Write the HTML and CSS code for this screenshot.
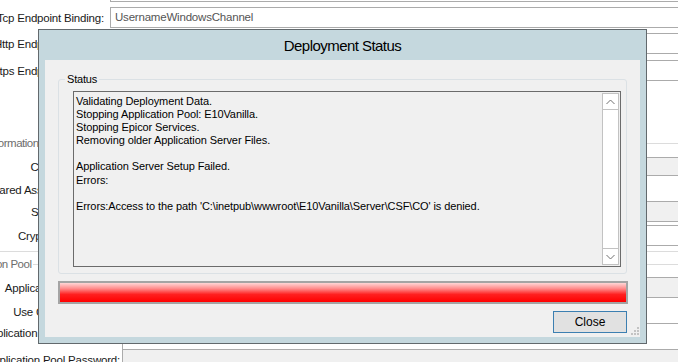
FILE: index.html
```html
<!DOCTYPE html>
<html>
<head>
    <title>Deployment Status</title>
    <link rel="stylesheet" href="styles.css">
</head>
<body>
    <div class="settings">
        <div class="row top-row">
            <div class="label"></div>
            <div class="field"></div>
        </div>
        <div class="row gap-5">
            <div class="label"><span>Tcp Endpoint Binding:</span></div>
            <div class="field">UsernameWindowsChannel</div>
        </div>
        <div class="row gap-5">
            <div class="label"><span>Http Endpoint Binding:</span></div>
            <div class="field"></div>
        </div>
        <div class="row gap-6">
            <div class="label"><span>Https Endpoint Binding:</span></div>
            <div class="field"></div>
        </div>

        <fieldset class="group server-group">
            <legend>Server Information</legend>
            <div class="row gap-7">
                <div class="label"><span>Configuration File:</span></div>
                <div class="field short disabled"></div>
            </div>
            <div class="row gap-4 plain-row">
                <div class="label"><span>Shared Assembly Location:</span></div>
            </div>
            <div class="row gap-2">
                <div class="label"><span>Server Descriptor:</span></div>
                <div class="field disabled"></div>
            </div>
            <div class="row gap-3">
                <div class="label"><span>Crypto Provider Key:</span></div>
                <div class="field"></div>
            </div>
        </fieldset>

        <fieldset class="group pool-group">
            <legend>Application Pool</legend>
            <div class="row gap-6">
                <div class="label"><span>Application Pool Name:</span></div>
                <div class="field disabled"></div>
            </div>
            <div class="row gap-4 plain-row">
                <div class="label"><span>Use Custom Account:</span></div>
            </div>
            <div class="row gap-2 user-row">
                <div class="label"><span>Application Pool Username:</span></div>
                <div class="field tall"></div>
            </div>
            <div class="row">
                <div class="label"><span>Application Pool Password:</span></div>
                <div class="field disabled"></div>
            </div>
        </fieldset>
    </div>

    <div class="dialog">
        <div class="dialog-title">Deployment Status</div>
        <div class="dialog-body">
            <div class="status-group">
                <span class="status-label">Status</span>
                <div class="log-box">
<div class="log-text">Validating Deployment Data.
Stopping Application Pool: E10Vanilla.
Stopping Epicor Services.
Removing older Application Server Files.

Application Server Setup Failed.
Errors:

Errors:Access to the path 'C:\inetpub\wwwroot\E10Vanilla\Server\CSF\CO' is denied.</div>
                    <div class="scrollbar">
                        <div class="scroll-btn up">
                            <svg width="9" height="6" viewBox="0 0 9 6"><polyline points="0.5,5 4.5,1 8.5,5" fill="none" stroke="#707070" stroke-width="1"/></svg>
                        </div>
                        <div class="scroll-track"></div>
                        <div class="scroll-btn down">
                            <svg width="9" height="6" viewBox="0 0 9 6"><polyline points="0.5,1 4.5,5 8.5,1" fill="none" stroke="#707070" stroke-width="1"/></svg>
                        </div>
                    </div>
                </div>
            </div>

            <div class="progress"></div>

            <div class="dialog-footer">
                <button class="close-btn">Close</button>
            </div>

            <svg class="grip" width="8" height="8" viewBox="0 0 8 8">
                <rect x="6" y="0" width="2" height="2" fill="#c3c3c3"/>
                <rect x="3" y="3" width="2" height="2" fill="#c3c3c3"/>
                <rect x="6" y="3" width="2" height="2" fill="#c3c3c3"/>
                <rect x="0" y="6" width="2" height="2" fill="#c3c3c3"/>
                <rect x="3" y="6" width="2" height="2" fill="#c3c3c3"/>
                <rect x="6" y="6" width="2" height="2" fill="#c3c3c3"/>
            </svg>
        </div>
    </div>
</body>
</html>
```

FILE: styles.css
```css
body {
    margin: 0;
    width: 678px;
    height: 362px;
    overflow: hidden;
    position: relative;
    background: #fff;
    font-family: "Liberation Sans", Arial, sans-serif;
}

/* form behind the dialog */
.settings {
    display: flex;
    flex-direction: column;
}
.row {
    display: flex;
    align-items: center;
}
.label {
    width: 104px;
    flex-shrink: 0;
    display: flex;
    justify-content: flex-end;
    white-space: nowrap;
    font-size: 11.5px;
    line-height: 14px;
    letter-spacing: -0.2px;
    color: #1a1a1a;
}
.field {
    flex: 1;
    min-width: 0;
    height: 21px;
    margin-left: 6px;
    margin-right: -10px;
    box-sizing: border-box;
    border: 1px solid #ababab;
    background: #fff;
    padding: 3px 4px;
    font-size: 11.5px;
    line-height: 13px;
    letter-spacing: -0.2px;
    color: #555;
    white-space: nowrap;
}
.field.disabled {
    background: #f0f0f0;
}
.field.short {
    height: 19px;
}
.field.tall {
    height: 26px;
    border-bottom: none;
}
.top-row {
    margin-top: -14px;
}
.top-row .field {
    height: 16px;
}
.gap-2 { margin-top: 2px; }
.gap-3 { margin-top: 3px; }
.gap-4 { margin-top: 4px; }
.gap-5 { margin-top: 5px; }
.gap-6 { margin-top: 6px; }
.gap-7 { margin-top: 7px; }
.plain-row {
    height: 19px;
}
.user-row {
    align-items: flex-start;
}
.user-row .label {
    padding-top: 3px;
}

.group {
    min-width: 0;
    margin: 0 -20px 0 -70px;
    padding: 0 0 5px 0;
    border: 1px solid #dcdcdc;
}
.group legend {
    padding: 0 2px;
    font-size: 11.5px;
    line-height: 14px;
    letter-spacing: -0.5px;
    color: #6d6d6d;
}
.server-group {
    margin-top: 55px;
}
.server-group legend {
    margin-left: 20px;
}
.pool-group {
    margin-top: 5px;
}
.pool-group legend {
    margin-left: 24px;
}
.group .label {
    width: 189px;
}
.group .field {
    margin-left: 2px;
}

/* dialog */
.dialog {
    position: absolute;
    left: 38px;
    top: 29px;
    width: 609px;
    height: 315px;
    box-sizing: border-box;
    border: 1px solid #62696d;
    background: #c5d8de;
    padding: 0 6px 6px;
    display: flex;
    flex-direction: column;
}
.dialog-title {
    height: 30px;
    flex-shrink: 0;
    display: flex;
    align-items: center;
    justify-content: center;
    font-size: 15px;
    letter-spacing: -0.55px;
    color: #000;
}
.dialog-body {
    flex: 1;
    position: relative;
    background: #f0f0f0;
    padding: 19px 12px 0 13px;
    display: flex;
    flex-direction: column;
}
.status-group {
    position: relative;
    width: 569px;
    height: 195px;
    box-sizing: border-box;
    border: 1px solid #dbe1e5;
    border-radius: 3px;
    padding: 11px 4px 0 14px;
}
.status-label {
    position: absolute;
    top: -8px;
    left: 6px;
    padding: 0 2px;
    background: #f0f0f0;
    font-size: 11px;
    line-height: 14px;
    letter-spacing: -0.2px;
    color: #000;
}
.log-box {
    width: 548px;
    height: 176px;
    box-sizing: border-box;
    border: 1px solid #6b6b6b;
    background: #f0f0f0;
    display: flex;
}
.log-text {
    flex: 1;
    padding: 3px 0 0 2px;
    font-size: 11px;
    line-height: 13.1px;
    letter-spacing: -0.1px;
    white-space: pre;
    color: #000;
    overflow: hidden;
}
.scrollbar {
    width: 17px;
    margin: 1px 1px 1px 0;
    box-sizing: border-box;
    border: 1px solid #c2c2c2;
    background: #fff;
    display: flex;
    flex-direction: column;
}
.scroll-btn {
    height: 15px;
    display: flex;
    align-items: center;
    justify-content: center;
}
.scroll-btn.up {
    border-bottom: 1px solid #c2c2c2;
}
.scroll-btn.down {
    border-top: 1px solid #c2c2c2;
}
.scroll-track {
    flex: 1;
}
.progress {
    margin-top: 7px;
    height: 23px;
    box-sizing: border-box;
    border: 2px solid #a4a4a4;
    background: linear-gradient(#ffd6d6 0%, #ff8a8a 30%, #ff2020 60%, #ff0000 100%);
}
.dialog-footer {
    margin-top: 7px;
    display: flex;
    justify-content: flex-end;
    padding-right: 1px;
}
.close-btn {
    width: 74px;
    height: 22px;
    padding: 0;
    border: 1px solid #3c7fb1;
    background: #e1e1e1;
    font-family: "Liberation Sans", Arial, sans-serif;
    font-size: 12px;
    color: #000;
}
.grip {
    position: absolute;
    right: 1px;
    bottom: 2px;
}
```
